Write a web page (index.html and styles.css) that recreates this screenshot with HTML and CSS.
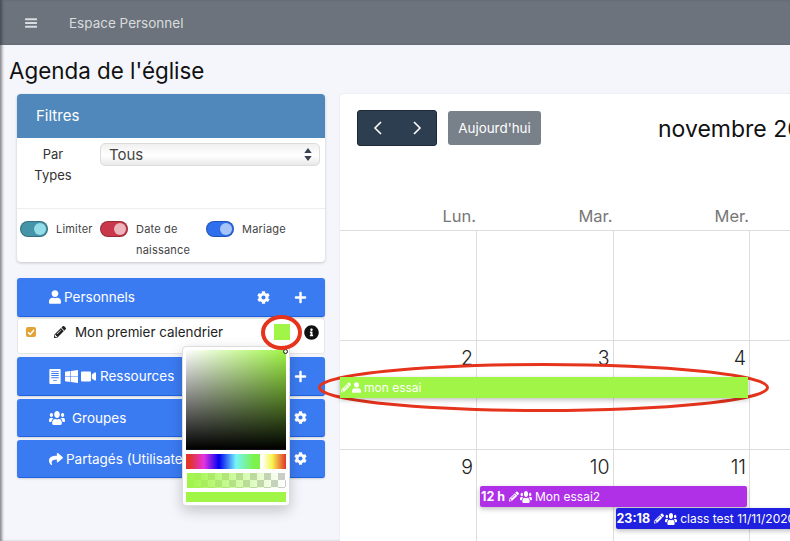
FILE: index.html
```html
<!DOCTYPE html>
<html lang="fr">
<head>
    <meta charset="UTF-8">
    <meta name="viewport" content="width=device-width, initial-scale=1.0">
    <title>Agenda de l'église</title>
    <link rel="stylesheet" href="styles.css">
</head>
<body>
    <svg class="sprite" xmlns="http://www.w3.org/2000/svg">
        <symbol id="i-plus" viewBox="0 0 448 512"><path d="M416 208H272V64c0-17.67-14.33-32-32-32h-32c-17.67 0-32 14.33-32 32v144H32c-17.67 0-32 14.33-32 32v32c0 17.67 14.33 32 32 32h144v144c0 17.67 14.33 32 32 32h32c17.67 0 32-14.33 32-32V304h144c17.67 0 32-14.33 32-32v-32c0-17.67-14.33-32-32-32z"/></symbol>
        <symbol id="i-user" viewBox="0 0 448 512"><path d="M224 256c70.7 0 128-57.3 128-128S294.7 0 224 0 96 57.3 96 128s57.3 128 128 128zm89.6 32h-16.7c-22.2 10.2-46.9 16-72.9 16s-50.6-5.8-72.9-16h-16.7C60.2 288 0 348.2 0 422.4V464c0 26.5 21.5 48 48 48h352c26.5 0 48-21.5 48-48v-41.6c0-74.2-60.2-134.4-134.4-134.4z"/></symbol>
        <symbol id="i-cog" viewBox="0 0 512 512"><path d="M487.4 315.7l-42.6-24.6c4.3-23.2 4.3-47 0-70.2l42.6-24.6c4.9-2.8 7.1-8.6 5.5-14-11.1-35.6-30-67.8-54.7-94.6-3.8-4.1-10-5.1-14.8-2.3L380.8 110c-17.9-15.4-38.5-27.3-60.8-35.1V25.8c0-5.6-3.9-10.5-9.4-11.7-36.7-8.2-74.3-7.8-109.2 0-5.5 1.2-9.4 6.1-9.4 11.7V75c-22.2 7.9-42.8 19.8-60.8 35.1L88.7 85.5c-4.9-2.8-11-1.9-14.8 2.3-24.7 26.7-43.6 58.9-54.7 94.6-1.7 5.4.6 11.2 5.5 14L67.3 221c-4.3 23.2-4.3 47 0 70.2l-42.6 24.6c-4.9 2.8-7.1 8.6-5.5 14 11.1 35.6 30 67.8 54.7 94.6 3.8 4.1 10 5.1 14.8 2.3l42.6-24.6c17.9 15.4 38.5 27.3 60.8 35.1v49.2c0 5.6 3.9 10.5 9.4 11.7 36.7 8.2 74.3 7.8 109.2 0 5.5-1.2 9.4-6.1 9.4-11.7v-49.2c22.2-7.9 42.8-19.8 60.8-35.1l42.6 24.6c4.9 2.8 11 1.9 14.8-2.3 24.7-26.7 43.6-58.9 54.7-94.6 1.5-5.5-.7-11.3-5.6-14.1zM256 336c-44.1 0-80-35.9-80-80s35.9-80 80-80 80 35.9 80 80-35.9 80-80 80z"/></symbol>
        <symbol id="i-pencil" viewBox="0 0 512 512"><path d="M497.9 142.1l-46.1 46.1c-4.7 4.7-12.3 4.7-17 0l-111-111c-4.7-4.7-4.7-12.3 0-17l46.1-46.1c18.7-18.7 49.1-18.7 67.9 0l60.1 60.1c18.8 18.7 18.8 49.1 0 67.9zM284.2 99.8L21.6 362.4.4 483.9c-2.9 16.4 11.4 30.6 27.8 27.8l121.5-21.3 262.6-262.6c4.7-4.7 4.7-12.3 0-17l-111-111c-4.8-4.7-12.4-4.7-17.1 0zM124.1 339.9c-5.5-5.5-5.5-14.3 0-19.8l154-154c5.5-5.5 14.3-5.5 19.8 0s5.5 14.3 0 19.8l-154 154c-5.5 5.5-14.3 5.5-19.8 0zM88 424h48v36.3l-64.5 11.3-31.1-31.1L51.7 376H88v48z"/></symbol>
        <symbol id="i-info" viewBox="0 0 512 512"><path d="M256 8C119.043 8 8 119.083 8 256c0 136.997 111.043 248 248 248s248-111.003 248-248C504 119.083 392.957 8 256 8zm0 110c23.196 0 42 18.804 42 42s-18.804 42-42 42-42-18.804-42-42 18.804-42 42-42zm56 254c0 6.627-5.373 12-12 12h-88c-6.627 0-12-5.373-12-12v-24c0-6.627 5.373-12 12-12h12v-64h-12c-6.627 0-12-5.373-12-12v-24c0-6.627 5.373-12 12-12h64c6.627 0 12 5.373 12 12v100h12c6.627 0 12 5.373 12 12v24z"/></symbol>
        <symbol id="i-users" viewBox="0 28 640 456" preserveAspectRatio="none"><path d="M96 224c35.3 0 64-28.7 64-64s-28.7-64-64-64-64 28.7-64 64 28.7 64 64 64zm448 0c35.3 0 64-28.7 64-64s-28.7-64-64-64-64 28.7-64 64 28.7 64 64 64zm32 32h-64c-17.6 0-33.5 7.1-45.1 18.6 40.3 22.1 68.9 62 75.1 109.4h66c17.7 0 32-14.3 32-32v-32c0-35.3-28.7-64-64-64zm-256 0c61.9 0 112-50.1 112-112S381.9 32 320 32 208 82.1 208 144s50.1 112 112 112zm76.8 32h-8.3c-20.8 10-43.9 16-68.5 16s-47.6-6-68.5-16h-8.3C179.6 288 128 339.6 128 403.2V432c0 26.5 21.5 48 48 48h288c26.5 0 48-21.5 48-48v-28.8c0-63.6-51.6-115.2-115.2-115.2zm-223.7-13.4C161.5 263.1 145.6 256 128 256H64c-35.3 0-64 28.7-64 64v32c0 17.7 14.3 32 32 32h65.9c6.3-47.4 34.9-87.3 75.2-109.4z"/></symbol>
        <symbol id="i-windows" viewBox="0 0 448 512"><path d="M0 93.7l183.6-25.3v177.4H0V93.7zm0 324.6l183.6 25.3V268.4H0v149.9zm203.8 28L448 480V268.4H203.8v177.9zm0-380.6v180.1H448V32L203.8 65.7z"/></symbol>
        <symbol id="i-video" viewBox="0 0 576 512"><path d="M336.2 64H47.8C21.4 64 0 85.4 0 111.8v288.4C0 426.6 21.4 448 47.8 448h288.4c26.4 0 47.8-21.4 47.8-47.8V111.8c0-26.4-21.4-47.8-47.8-47.8zm189.4 37.7L416 177.3v157.4l109.6 75.5c21.2 14.6 50.4-.3 50.4-25.8V127.5c0-25.4-29.1-40.4-50.4-25.8z"/></symbol>
        <symbol id="i-share" viewBox="0 0 512 512"><path d="M503.691 189.836L327.687 37.851C312.281 24.546 288 35.347 288 56.015v80.053C127.371 137.907 0 170.1 0 322.326c0 61.441 39.581 122.309 83.333 154.132 13.653 9.931 33.111-2.533 28.077-18.631C66.066 312.814 132.917 274.316 288 272.085V360c0 20.7 24.3 31.453 39.687 18.164l176-152c11.071-9.562 11.086-26.753.004-36.328z"/></symbol>
        <symbol id="i-server" viewBox="0 0 384 512"><path fill-rule="evenodd" d="M24 0h336c13 0 24 11 24 24v464c0 13-11 24-24 24H24c-13 0-24-11-24-24V24C0 11 11 0 24 0zm40 64v32h256V64H64zm0 72v32h256v-32H64zm0 72v32h256v-32H64zm0 72v32h256v-32H64zm64 92v32h128v-32H128z"/></symbol>
    </svg>

    <header class="topbar">
        <svg class="burger" viewBox="0 0 14 12" fill="currentColor"><rect width="13" height="2" y="1" rx=".6"/><rect width="13" height="2" y="5" rx=".6"/><rect width="13" height="2" y="9" rx=".6"/></svg>
        <span class="topbar-title">Espace Personnel</span>
    </header>

    <h1 class="page-title">Agenda de l'église</h1>

    <main class="content">
        <aside class="sidebar">
            <section class="filters">
                <div class="filters-head">Filtres</div>
                <div class="filters-type">
                    <label class="type-label">Par Types</label>
                    <div class="select">
                        <span>Tous</span>
                        <svg class="select-arrows" viewBox="0 0 8 14"><path d="M4 0l4 5.500H0zM4 14L0 8.500h8z"/></svg>
                    </div>
                </div>
                <div class="filters-toggles">
                    <div class="toggle-item toggle-limit">
                        <span class="switch teal"></span>
                        <span class="toggle-label">Limiter</span>
                    </div>
                    <div class="toggle-item toggle-birth">
                        <span class="switch red"></span>
                        <span class="toggle-label">Date de naissance</span>
                    </div>
                    <div class="toggle-item">
                        <span class="switch blue"></span>
                        <span class="toggle-label">Mariage</span>
                    </div>
                </div>
            </section>

            <div class="group-head">
                <svg class="ic user"><use href="#i-user"/></svg>
                <span class="group-name tight">Personnels</span>
                <svg class="ic action"><use href="#i-cog"/></svg>
                <svg class="ic action"><use href="#i-plus"/></svg>
            </div>
            <div class="calendar-row">
                <span class="check"><svg viewBox="0 0 10 10"><path d="M2 5.200l2.200 2.200L8 3" fill="none" stroke="#fff" stroke-width="1.600"/></svg></span>
                <svg class="ic pencil"><use href="#i-pencil"/></svg>
                <span class="calendar-name">Mon premier calendrier</span>
                <span class="swatch"></span>
                <svg class="ic info"><use href="#i-info"/></svg>
            </div>
            <div class="group-head">
                <svg class="ic server"><use href="#i-server"/></svg>
                <svg class="ic win"><use href="#i-windows"/></svg>
                <svg class="ic vid"><use href="#i-video"/></svg>
                <span class="group-name tight">Ressources</span>
                <svg class="ic action"><use href="#i-plus"/></svg>
            </div>
            <div class="group-head short">
                <svg class="ic users"><use href="#i-users"/></svg>
                <span class="group-name">Groupes</span>
                <svg class="ic action"><use href="#i-cog"/></svg>
            </div>
            <div class="group-head short">
                <svg class="ic share"><use href="#i-share"/></svg>
                <span class="group-name tight">Partagés (Utilisateurs)</span>
                <svg class="ic action"><use href="#i-cog"/></svg>
            </div>

            <!-- colour picker opened from the swatch -->
            <div class="picker">
                <div class="picker-square"><span class="picker-dot"></span></div>
                <div class="picker-hue"></div>
                <div class="picker-alpha"></div>
                <div class="picker-current"></div>
            </div>
        </aside>

        <section class="calendar">
            <div class="cal-toolbar">
                <div class="nav-buttons">
                    <svg viewBox="0 0 10 16"><path d="M8 2L2 8l6 6" fill="none" stroke="#fff" stroke-width="1.600"/></svg>
                    <svg viewBox="0 0 10 16"><path d="M2 2l6 6-6 6" fill="none" stroke="#fff" stroke-width="1.600"/></svg>
                </div>
                <button class="today">Aujourd'hui</button>
                <h2 class="cal-title">novembre 2020</h2>
            </div>
            <div class="weekdays">
                <span>Lun.</span><span>Mar.</span><span>Mer.</span><span></span>
            </div>
            <div class="week">
                <div class="day"></div><div class="day"></div><div class="day"></div><div class="day"></div>
            </div>
            <div class="week">
                <div class="day">2</div><div class="day">3</div><div class="day">4</div><div class="day"></div>
                <div class="event ev-green">
                    <svg class="ic"><use href="#i-pencil"/></svg><svg class="ic user"><use href="#i-user"/></svg><span>mon essai</span>
                </div>
            </div>
            <div class="week">
                <div class="day">9</div><div class="day">10</div><div class="day">11</div><div class="day"></div>
                <div class="event ev-purple">
                    <b>12 h</b><svg class="ic"><use href="#i-pencil"/></svg><svg class="ic wide"><use href="#i-users"/></svg><span>Mon essai2</span>
                </div>
                <div class="event ev-blue">
                    <b>23:18</b><svg class="ic"><use href="#i-pencil"/></svg><svg class="ic wide"><use href="#i-users"/></svg><span>class test 11/11/2020</span>
                </div>
            </div>
        </section>
    </main>

    <!-- hand-drawn red annotations over the screenshot -->
    <svg class="marks" viewBox="0 0 790 541" fill="none" stroke="#e5331c">
        <ellipse cx="281.500" cy="332.500" rx="18.500" ry="15.500" stroke-width="4"/>
        <ellipse cx="543.500" cy="387.500" rx="224" ry="23" stroke-width="3"/>
    </svg>
</body>
</html>
```

FILE: styles.css
```css
* {
    box-sizing: border-box;
}
html, body {
    margin: 0;
    height: 100%;
    overflow: hidden;
}
body {
    position: relative;
    font-family: Inter, "Liberation Sans", sans-serif;
    background: #f4f6fb;
    color: #222;
    box-shadow: inset 3px 0 3px -1px rgba(0,0,0,0.45);
}
.sprite {
    display: none;
}
.ic {
    display: inline-block;
    fill: currentColor;
    width: 14px;
    height: 14px;
    flex: none;
}

/* top bar */
.topbar {
    display: flex;
    align-items: center;
    height: 45px;
    padding-left: 25px;
    background: #6c737c;
    color: #d9dcdf;
    font-size: 13.500px;
    box-shadow: inset 3px 0 3px -1px rgba(0,0,0,0.35);
}
.burger {
    width: 13px;
    height: 12px;
}
.topbar-title {
    margin-left: 31px;
}
.page-title {
    margin: 0;
    padding: 12px 0 0 9px;
    height: 49px;
    font-size: 22.400px;
    font-weight: 400;
    line-height: 27px;
    color: #111;
}
.content {
    display: flex;
    align-items: flex-start;
    padding-left: 17px;
}

/* left column */
.sidebar {
    position: relative;
    flex: none;
    width: 308px;
    margin-right: 15px;
}
.filters {
    height: 168px;
    background: #fff;
    border-radius: 4px;
    box-shadow: 0 1px 3px rgba(0,0,0,0.2);
    margin-bottom: 16px;
}
.filters-head {
    height: 44px;
    padding: 0 19px;
    line-height: 43px;
    background: #5088bb;
    color: #fff;
    font-size: 15px;
    border-radius: 4px 4px 0 0;
}
.filters-type {
    display: flex;
    height: 71px;
    border-bottom: 1px solid #eceef0;
}
.type-label {
    width: 83px;
    padding: 6px 24px 0 13px;
    text-align: center;
    font-size: 13px;
    line-height: 21px;
    color: #333;
}
.select {
    display: flex;
    align-items: center;
    justify-content: space-between;
    width: 220px;
    height: 23px;
    margin-top: 5px;
    padding: 0 4px 0 8px;
    font-size: 15px;
    color: #444;
    background: linear-gradient(#f0f0f0, #fff 55%, #e8e8e8);
    border: 1px solid #ddd;
    border-radius: 5px;
}
.select-arrows {
    width: 8px;
    height: 13px;
    margin-right: 3px;
    fill: #39424f;
}
.filters-toggles {
    display: flex;
    align-items: flex-start;
    padding: 10px 3px 0;
    font-size: 11px;
    letter-spacing: 0.2px;
    color: #444;
}
.toggle-item {
    display: flex;
    align-items: flex-start;
}
.toggle-limit {
    width: 80px;
}
.toggle-birth {
    width: 106px;
}
.toggle-label {
    margin-left: 8px;
    width: 64px;
    line-height: 21px;
}
.switch {
    position: relative;
    flex: none;
    width: 28px;
    height: 16px;
    margin-top: 2px;
    border-radius: 8px;
    border: 1px solid rgba(0,0,0,0.25);
}
.switch::after {
    content: "";
    position: absolute;
    top: 1px;
    right: 1px;
    width: 12px;
    height: 12px;
    border-radius: 50%;
}
.switch.teal { background: #4594a8; }
.switch.teal::after { background: #94dde8; }
.switch.red { background: #c8384a; }
.switch.red::after { background: #ecb4bb; }
.switch.blue { background: #2f6fed; }
.switch.blue::after { background: #a7c4f9; }
.group-head {
    display: flex;
    align-items: center;
    height: 39px;
    margin-bottom: 3px;
    padding: 0 18px 0 32px;
    background: #3b7bf2;
    color: #fff;
    font-size: 13.500px;
    border-radius: 3px;
    border-bottom: 1px solid #1e63dd;
    box-shadow: 0 1px 2px rgba(0,0,0,0.15);
}
.group-head.short {
    height: 38px;
}
.group-name {
    margin-left: 7px;
    flex: 1;
    white-space: nowrap;
}
.group-name.tight {
    margin-left: 3px;
}
.group-head .ic.user {
    width: 12px;
    height: 14px;
}
.group-head .ic.server {
    width: 12px;
    height: 15px;
    margin-right: 4px;
}
.group-head .ic.win {
    width: 13px;
    height: 15px;
    margin-right: 3px;
}
.group-head .ic.vid {
    width: 15px;
    height: 15px;
    margin-right: 1px;
}
.group-head .ic.users {
    width: 16px;
    height: 14px;
}
.group-head .action {
    width: 13px;
    height: 13px;
    margin-left: 24px;
}
.calendar-row {
    display: flex;
    align-items: center;
    height: 36px;
    margin: -2px 0 3px;
    padding: 0 5px 8px 8px;
    background: #fff;
    border: 1px solid #e6e6e6;
    border-radius: 3px;
    font-size: 13.400px;
    color: #222;
}
.check {
    display: flex;
    width: 10px;
    height: 10px;
    background: #e2a234;
    border-radius: 2px;
}
.pencil {
    width: 12px;
    height: 12px;
    margin-left: 18px;
    color: #222;
}
.calendar-name {
    flex: 1;
    margin-left: 9px;
}
.swatch {
    width: 16px;
    height: 16px;
    background: #a0f546;
}
.info {
    width: 15px;
    height: 15px;
    margin-left: 14px;
    color: #111;
}

/* colour picker */
.picker {
    position: absolute;
    left: 165px;
    top: 252px;
    width: 108px;
    height: 160px;
    padding: 3px;
    background: #fff;
    border: 1px solid #ddd;
    border-radius: 4px;
    box-shadow: 0 5px 14px rgba(0,0,0,0.2);
}
.picker::before {
    content: "";
    position: absolute;
    top: -6px;
    right: 6px;
    width: 0;
    height: 0;
    border: 6px solid transparent;
    border-top: 0;
    border-bottom-color: #fff;
}
.picker-square {
    position: relative;
    height: 100px;
    background: linear-gradient(to bottom, transparent, #000), linear-gradient(to right, #fff, #a0f546);
    border-bottom: 1px solid #111;
}
.picker-dot {
    position: absolute;
    top: -1px;
    right: -2px;
    width: 5px;
    height: 5px;
    border: 1px solid #222;
    border-radius: 50%;
    background: #e8f5d8;
}
.picker-hue {
    height: 15px;
    margin-top: 4px;
    background: linear-gradient(to right, #e0342c 0, #e0342c 4%, #e534e0 18%, #0000f0 33%, #76f5fa 50%, #7cf24a 68%, #7cf24a 74%, #fff 74%, #fff 76%, #f7f74c 86%, #e0342c 100%);
}
.picker-alpha {
    height: 15px;
    margin: 4px 0 0 1px;
    background: linear-gradient(to right, #a0f546, rgba(160,245,70,0)), repeating-conic-gradient(#ccc 0 25%, #fff 0 50%) 0 0 / 14px 14px;
}
.picker-current {
    height: 10px;
    margin-top: 4px;
    background: #a0f546;
}

/* calendar */
.calendar {
    flex: none;
    width: 547px;
    height: 450px;
    background: #fff;
    border-radius: 4px;
    box-shadow: 0 0 2px rgba(0,0,0,0.1);
}
.cal-toolbar {
    display: flex;
    align-items: center;
    height: 68px;
    padding-left: 17px;
}
.nav-buttons {
    display: flex;
    align-items: center;
    justify-content: space-around;
    width: 80px;
    height: 36px;
    background: #2d3e50;
    border: 1px solid #1c2a38;
    border-radius: 3px;
}
.nav-buttons svg {
    width: 10px;
    height: 16px;
}
.today {
    width: 93px;
    height: 34px;
    margin-left: 11px;
    padding: 0;
    font: 400 13.400px Inter, "Liberation Sans", sans-serif;
    color: #fff;
    background: #78808a;
    border: none;
    border-radius: 3px;
}
.cal-title {
    margin: 1px 0 0 117px;
    font-size: 23px;
    font-weight: 400;
    color: #111;
    white-space: nowrap;
}
.weekdays {
    display: grid;
    grid-template-columns: 137px repeat(3, 136.500px);
    height: 69px;
    padding-top: 42px;
    border-bottom: 1px solid #ddd;
    font-size: 16.500px;
    line-height: 24px;
    color: #777;
    text-align: right;
}
.weekdays span {
    padding-right: 1px;
}
.week {
    display: grid;
    grid-template-columns: 137px repeat(3, 136.500px);
    grid-template-rows: 36px 21px 1px 21px 1fr;
    height: 109.500px;
    border-bottom: 1px solid #ddd;
}
.day {
    grid-row: 1 / -1;
    padding: 5px 3px 0 0;
    border-right: 1px solid #ddd;
    font-size: 19.500px;
    font-weight: 300;
    line-height: 24px;
    text-align: right;
    color: #222;
}
.day:nth-child(1) { grid-column: 1; }
.day:nth-child(2) { grid-column: 2; }
.day:nth-child(3) { grid-column: 3; }
.day:nth-child(4) { grid-column: 4; }
.event {
    z-index: 1;
    display: flex;
    align-items: center;
    padding: 0 1px;
    height: 21px;
    font-size: 12px;
    color: #fff;
    white-space: nowrap;
    box-shadow: 0 2px 5px rgba(0,0,0,0.25);
}
.event b {
    font-size: 12.500px;
    margin-right: 4px;
}
.event .ic {
    width: 10px;
    height: 11px;
}
.event .ic.user {
    width: 9px;
    margin-left: 1px;
}
.event .ic.wide {
    width: 12px;
    height: 12px;
    margin-left: 1px;
}
.event span {
    margin-left: 3px;
}
.ev-green {
    grid-column: 1 / 4;
    grid-row: 2;
    margin-right: 2px;
    background: #a0f546;
}
.ev-purple {
    grid-column: 2 / 4;
    grid-row: 2;
    margin: 0 3px;
    background: #b030e8;
    border-radius: 2px;
}
.ev-blue {
    grid-column: 3 / 5;
    grid-row: 4;
    margin-left: 2px;
    background: #2020e0;
    border-radius: 2px;
}

/* annotations */
.marks {
    position: absolute;
    top: 0;
    left: 0;
    width: 790px;
    height: 541px;
    pointer-events: none;
}
```
